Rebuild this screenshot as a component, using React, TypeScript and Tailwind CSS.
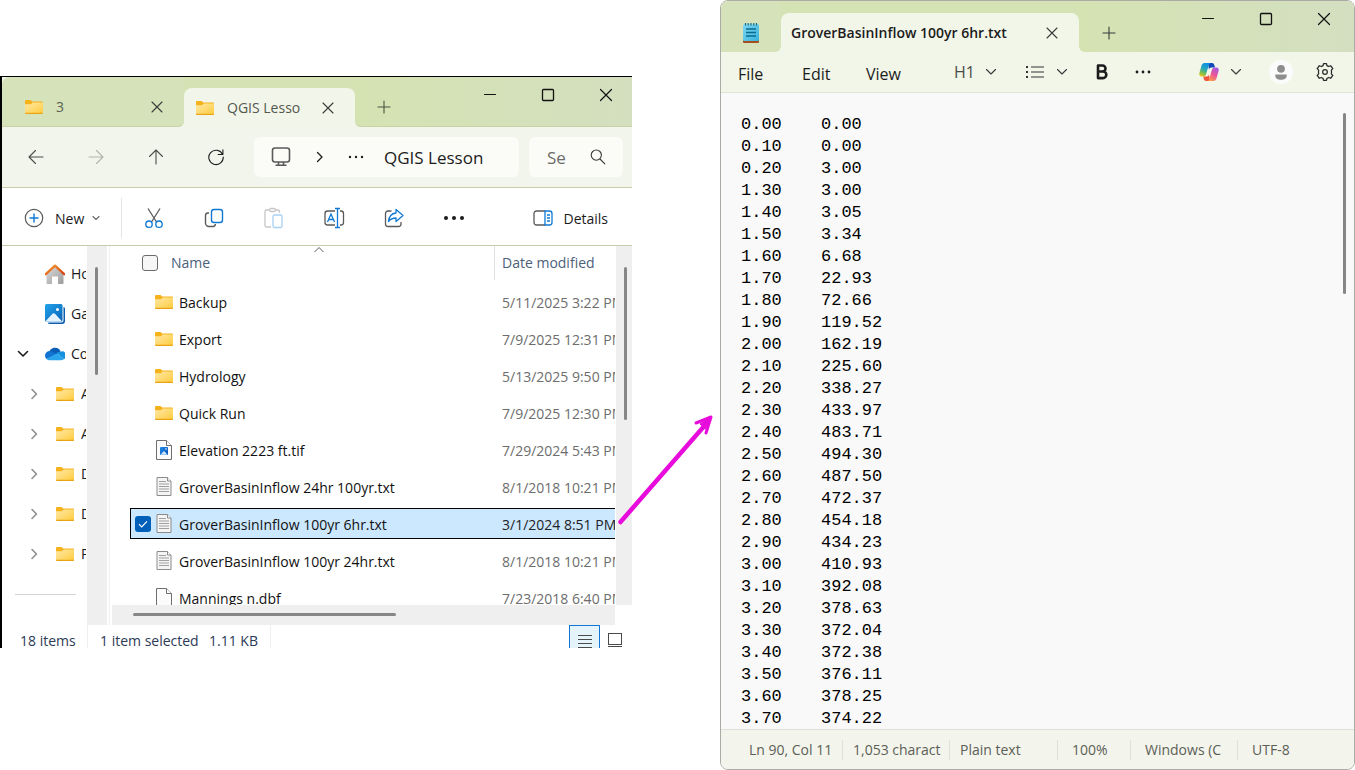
import React, { useId } from "react";

const sans = "font-['Open_Sans','Noto_Sans',sans-serif]";

const rows = [
  { name: "Backup", date: "5/11/2025 3:22 PM", kind: "folder" },
  { name: "Export", date: "7/9/2025 12:31 PM", kind: "folder" },
  { name: "Hydrology", date: "5/13/2025 9:50 PM", kind: "folder" },
  { name: "Quick Run", date: "7/9/2025 12:30 PM", kind: "folder" },
  { name: "Elevation 2223 ft.tif", date: "7/29/2024 5:43 PM", kind: "image" },
  { name: "GroverBasinInflow 24hr 100yr.txt", date: "8/1/2018 10:21 PM", kind: "text" },
  { name: "GroverBasinInflow 100yr 6hr.txt", date: "3/1/2024 8:51 PM", kind: "text", selected: true },
  { name: "GroverBasinInflow 100yr 24hr.txt", date: "8/1/2018 10:21 PM", kind: "text" },
  { name: "Mannings n.dbf", date: "7/23/2018 6:40 PM", kind: "blank" },
];

const samples = [
  ["0.00", "0.00"], ["0.10", "0.00"], ["0.20", "3.00"], ["1.30", "3.00"], ["1.40", "3.05"],
  ["1.50", "3.34"], ["1.60", "6.68"], ["1.70", "22.93"], ["1.80", "72.66"], ["1.90", "119.52"],
  ["2.00", "162.19"], ["2.10", "225.60"], ["2.20", "338.27"], ["2.30", "433.97"], ["2.40", "483.71"],
  ["2.50", "494.30"], ["2.60", "487.50"], ["2.70", "472.37"], ["2.80", "454.18"], ["2.90", "434.23"],
  ["3.00", "410.93"], ["3.10", "392.08"], ["3.20", "378.63"], ["3.30", "372.04"], ["3.40", "372.38"],
  ["3.50", "376.11"], ["3.60", "378.25"], ["3.70", "374.22"],
];

function Folder() {
  const id = useId();
  return (
    <svg width="20" height="16" viewBox="0 0 20 16" className="shrink-0" aria-hidden="true">
      <defs>
        <linearGradient id={id} x1="0" y1="0" x2="1" y2="1">
          <stop offset="0" stopColor="#ffe9a6" />
          <stop offset="1" stopColor="#ffcb3d" />
        </linearGradient>
      </defs>
      <path d="M1 2a1 1 0 0 1 1-1h4.500L8.300 2.500H18a1 1 0 0 1 1 1V6H1z" fill="#f5b21a" />
      <path d="M1 5.200h6L8.600 3.600H19V14a1 1 0 0 1-1 1H2a1 1 0 0 1-1-1z" fill={`url(#${id})`} />
      <path d="M1 13.700V14a1 1 0 0 0 1 1h16a1 1 0 0 0 1-1v-.3z" fill="#e9a317" />
    </svg>
  );
}

function TextFile() {
  return (
    <svg width="16" height="20" viewBox="0 0 16 20" className="shrink-0" aria-hidden="true">
      <path d="M1 .5h10.500L15 4v14.500H1z" fill="#f4f4f4" stroke="#8b8b8b" />
      <path d="M11.500.5V4H15" fill="#fff" stroke="#8b8b8b" />
      <path d="M3 4.500h7M3 7h10M3 9.500h10M3 12h10M3 14.500h10" stroke="#a0a0a0" />
    </svg>
  );
}

function PageFile({ picture }: { picture?: boolean }) {
  const id = useId();
  return (
    <svg width="16" height="20" viewBox="0 0 16 20" className="shrink-0" aria-hidden="true">
      <path d="M.5.500h10L15.500 5.500v14H.5z" fill="#fbfbfb" stroke="#6f6f6f" />
      <path d="M10.500.5v5h5" fill="#fff" stroke="#6f6f6f" />
      {picture && (
        <>
          <defs>
            <linearGradient id={id} x1="0" y1="0" x2="1" y2="1">
              <stop offset="0" stopColor="#1b8ce8" />
              <stop offset="1" stopColor="#0a4fb4" />
            </linearGradient>
          </defs>
          <rect x="4" y="7" width="8" height="8" rx=".8" fill={`url(#${id})`} />
          <path d="M4.500 14.800 8 11l3.500 3.800z" fill="#cfe9ff" />
          <circle cx="10" cy="9" r=".8" fill="#fff" />
        </>
      )}
    </svg>
  );
}

function FileIcon({ kind }: { kind: string }) {
  if (kind === "folder") return <Folder />;
  if (kind === "text") return <TextFile />;
  return <PageFile picture={kind === "image"} />;
}

type StrokeProps = {
  d: string;
  w?: number;
  h?: number;
  stroke?: string;
  sw?: number;
};

function Stroke({ d, w = 16, h = 16, stroke = "#3a3a3a", sw = 1.1 }: StrokeProps) {
  return (
    <svg
      width={w}
      height={h}
      viewBox={`0 0 ${w} ${h}`}
      fill="none"
      stroke={stroke}
      strokeWidth={sw}
      strokeLinecap="round"
      strokeLinejoin="round"
      className="shrink-0"
      aria-hidden="true"
    >
      <path d={d} />
    </svg>
  );
}

const CLOSE = "M3 3l10 10M13 3L3 13";
const PLUS = "M8 2v12M2 8h12";

function Dots({ size = 16, r = 1.2, gap = 6 }: { size?: number; r?: number; gap?: number }) {
  const c = size / 2;
  return (
    <svg width={size} height={size} viewBox={`0 0 ${size} ${size}`} fill="#1c1c1c" className="shrink-0" aria-hidden="true">
      <circle cx={c - gap} cy={c} r={r} />
      <circle cx={c} cy={c} r={r} />
      <circle cx={c + gap} cy={c} r={r} />
    </svg>
  );
}

function WindowControls() {
  const button = "flex h-9 w-[52px] items-center justify-center";
  return (
    <div className="ml-auto flex gap-[6px] self-start">
      <button aria-label="Minimize" className={button}>
        <Stroke d="M2.500 7.500h11" stroke="#111" sw={1} />
      </button>
      <button aria-label="Maximize" className={button}>
        <svg width="16" height="16" viewBox="0 0 16 16" fill="none" stroke="#111" strokeWidth="1.300" aria-hidden="true">
          <rect x="2.500" y="2.500" width="11" height="11" rx="1" />
        </svg>
      </button>
      <button aria-label="Close" className={button}>
        <Stroke d="M2.500 2.500l11 11M13.500 2.500l-11 11" stroke="#111" sw={1.2} />
      </button>
    </div>
  );
}

function HomeIcon() {
  return (
    <svg width="20" height="20" viewBox="0 0 20 20" className="shrink-0" aria-hidden="true">
      <defs>
        <linearGradient id="wall" x1="0" y1="0" x2="1" y2="1">
          <stop offset="0" stopColor="#dcdcdc" />
          <stop offset="1" stopColor="#9b9b9b" />
        </linearGradient>
        <linearGradient id="roof" x1="0" y1="0" x2="1" y2="1">
          <stop offset="0" stopColor="#f79b2e" />
          <stop offset="1" stopColor="#d5400e" />
        </linearGradient>
      </defs>
      <path d="M1.500 9.500 10 2l8.500 7.500V19a1 1 0 0 1-1 1H13v-7.500H7V20H2.500a1 1 0 0 1-1-1z" fill="url(#wall)" />
      <path d="M.8 10.200 10 1.600l9.200 8.600" fill="none" stroke="url(#roof)" strokeWidth="2.300" strokeLinejoin="round" strokeLinecap="round" />
    </svg>
  );
}

function GalleryIcon() {
  return (
    <svg width="20" height="20" viewBox="0 0 20 20" className="shrink-0" aria-hidden="true">
      <defs>
        <linearGradient id="sky" x1="0" y1="0" x2="1" y2="1">
          <stop offset="0" stopColor="#22a4ea" />
          <stop offset="1" stopColor="#0862b8" />
        </linearGradient>
      </defs>
      <path d="M18.500 3a1.500 1.500 0 0 1 1.500 1.500v12.500a3 3 0 0 1-3 3H4.500A1.500 1.500 0 0 1 3 18.500h13a2.500 2.500 0 0 0 2.500-2.500z" fill="#0b5fae" />
      <rect width="17.500" height="17.500" rx="1.500" fill="url(#sky)" />
      <path d="M1 16.800 7.200 10a2 2 0 0 1 3 0l6.300 6.800a1.500 1.500 0 0 1-1 .7H2a1.500 1.500 0 0 1-1-.7z" fill="#e4f3ff" />
      <circle cx="12.500" cy="5.500" r="1.500" fill="#fff" />
    </svg>
  );
}

function CloudIcon() {
  return (
    <svg width="20" height="14" viewBox="0 0 20 14" className="shrink-0" aria-hidden="true">
      <path d="M4 6.500C4.200 3 6.800.8 10 .8s5.200 1.800 5.700 4.400L10 9z" fill="#0a5cb5" />
      <path d="M5 4A4.800 4.800 0 0 0 0 8.800a4.400 4.400 0 0 0 1.500 3.300L12 7.600 8 4.900A5 5 0 0 0 5 4z" fill="#1173cf" />
      <path d="M15.200 4.900c-1.600-.2-2.600.2-3.900 1L19.300 12a4.100 4.100 0 0 0-4.100-7.100z" fill="#1490df" />
      <path d="M11.500 6.600 1.400 12A4.600 4.600 0 0 0 4.700 13.300h11.100a4.200 4.200 0 0 0 3.800-2z" fill="#2aa5ec" />
    </svg>
  );
}

function Bar({ className }: { className: string }) {
  return <span className={`block rounded-full bg-[#868686] ${className}`} />;
}

function Explorer() {
  const tool = "flex h-10 w-[60px] items-center justify-center";
  const label = "overflow-hidden whitespace-nowrap";
  return (
    <section className={`${sans} mt-[76px] min-w-0 overflow-hidden border-t border-l-2 border-black bg-white text-sm text-[#1b1b1b]`}>
      <header className="flex h-[50px] bg-[#f2f5ea]">
        <div className="flex w-[182px] shrink-0 items-center rounded-tl-lg rounded-br-md border-b border-[#c8d2a4] bg-[#d6e2ba] pt-[11px] pr-[19px] pl-[22px]">
          <button className="flex flex-1 items-center gap-3 text-left text-[#5b6150]">
            <Folder />3
          </button>
          <button aria-label="Close tab 3"><Stroke d={CLOSE} /></button>
        </div>
        <div className="flex w-[171px] shrink-0 bg-[#d5e3b4] pt-[11px]">
          <div className="flex w-full items-center rounded-t-lg bg-[#f2f5ea] pr-[19px] pl-[11px]">
            <button className="flex flex-1 items-center gap-3 text-left font-medium whitespace-nowrap text-[#55584f]">
              <Folder />QGIS Lesso
            </button>
            <button aria-label="Close tab QGIS Lesson"><Stroke d={CLOSE} /></button>
          </div>
        </div>
        <div className="flex min-w-0 flex-1 rounded-bl-md border-b border-[#c8d2a4] bg-linear-to-r from-[#d5e3b3] to-[#d3dfbe]">
          <button aria-label="New tab" className="mt-[11px] ml-[21px] flex items-center">
            <Stroke d={PLUS} stroke="#4c5340" />
          </button>
          <WindowControls />
        </div>
      </header>

      <nav aria-label="Navigation" className="flex h-[61px] items-center border-b border-[#c6cbaa] bg-[#f2f5eb] pr-[9px] pl-1">
        <button aria-label="Back" className={tool}><Stroke w={18} h={18} d="M16 9H2M8.500 2.500 2 9l6.500 6.500" stroke="#4b4d48" /></button>
        <button aria-label="Forward" className={tool}><Stroke w={18} h={18} d="M2 9h14M9.500 2.500 16 9l-6.500 6.500" stroke="#b1b4ab" /></button>
        <button aria-label="Up" className={tool}><Stroke w={18} h={18} d="M9 16V2M2.500 8.500 9 2l6.500 6.500" stroke="#4b4d48" /></button>
        <button aria-label="Refresh" className={tool}><Stroke w={18} h={18} d="M15.500 6.300A7.200 7.200 0 1 0 16.200 9M15.900 1.800v4.700h-4.700" stroke="#1c1c1c" sw={1.1} /></button>
        <div className="ml-2 flex h-10 min-w-0 flex-1 items-center gap-5 rounded-md bg-[#fbfcf8] pl-4">
          <svg width="22" height="22" viewBox="0 0 22 22" fill="none" stroke="#5a5a5a" strokeWidth="1.600" className="shrink-0" aria-hidden="true">
            <rect x="2.500" y="2" width="17" height="14" rx="2.500" />
            <path d="M8.500 16v2.500M13.500 16v2.500M5.500 19.200h11" />
          </svg>
          <Stroke d="M5.500 3.500 10 8l-4.500 4.500" stroke="#1c1c1c" sw={1.3} />
          <Dots />
          <button className="pt-[2px] text-[17px] whitespace-nowrap">QGIS Lesson</button>
        </div>
        <label className="ml-[10px] flex h-10 w-[94px] shrink-0 items-center rounded-md bg-[#fbfcf8] pr-4 pl-[18px]">
          <input type="search" aria-label="Search" placeholder="Se" className="w-0 min-w-0 flex-1 bg-transparent pt-[2px] text-[17px] outline-none placeholder:text-[#6b6d66]" />
          <Stroke w={18} h={18} d="M7.300 2a5 5 0 1 1 0 10.200 5 5 0 0 1 0-10.200M11 11l4.800 4.800" />
        </label>
      </nav>

      <div role="toolbar" aria-label="Commands" className="flex h-[58px] items-center border-b border-[#c6cbaa] pt-[2px] pr-6">
        <button className="flex h-10 w-[120px] shrink-0 items-center border-r border-[#e6e6e6] pl-[22px]">
          <svg width="20" height="20" viewBox="0 0 20 20" fill="none" aria-hidden="true">
            <circle cx="10" cy="10" r="8.700" stroke="#5a5a5a" strokeWidth="1.200" />
            <path d="M10 5.500v9M5.500 10h9" stroke="#0f78d4" strokeWidth="1.400" />
          </svg>
          <span className="mr-1 ml-[11px] pt-[2px]">New</span>
          <Stroke d="M5 6.500 8 9.500l3-3" stroke="#6b6b6b" />
        </button>
        <div className="ml-[2px] flex flex-1">
          <button aria-label="Cut" className={tool}>
            <svg width="22" height="22" viewBox="0 0 22 22" fill="none" strokeWidth="1.300" aria-hidden="true">
              <path d="M5 1.500 13.500 15M17 1.500 8.500 15" stroke="#5a5a5a" />
              <circle cx="6" cy="17.200" r="3.200" stroke="#0f78d4" />
              <circle cx="16" cy="17.200" r="3.200" stroke="#0f78d4" />
            </svg>
          </button>
          <button aria-label="Copy" className={tool}>
            <svg width="22" height="22" viewBox="0 0 22 22" fill="none" strokeWidth="1.400" aria-hidden="true">
              <path d="M6 6H5a2.500 2.500 0 0 0-2.500 2.500v7.500A3.500 3.500 0 0 0 6 19.500h4A2.500 2.500 0 0 0 12.400 17" stroke="#5a5a5a" />
              <rect x="8.500" y="2.500" width="11" height="13" rx="2.500" stroke="#0f78d4" />
            </svg>
          </button>
          <button aria-label="Paste" disabled className={tool}>
            <svg width="22" height="22" viewBox="0 0 22 22" fill="none" strokeWidth="1.300" aria-hidden="true">
              <path d="M7 3H3.500a1.500 1.500 0 0 0-1.500 1.500v14A1.500 1.500 0 0 0 3.500 20H8M13 3h2a1.500 1.500 0 0 1 1.500 1.500V6" stroke="#c6c6c6" />
              <rect x="6.500" y="1.500" width="6" height="3" rx="1.500" stroke="#c6c6c6" />
              <rect x="10" y="8" width="9" height="12.500" rx="1.500" stroke="#a9d0f2" />
            </svg>
          </button>
          <button aria-label="Rename" className={tool}>
            <svg width="22" height="22" viewBox="0 0 22 22" fill="none" strokeWidth="1.300" aria-hidden="true">
              <path d="M12 4H4.500A2.500 2.500 0 0 0 2 6.500v9A2.500 2.500 0 0 0 4.500 18H12M17 4h1a2.500 2.500 0 0 1 2.500 2.500v9A2.500 2.500 0 0 1 18 18h-1" stroke="#5a5a5a" />
              <path d="M4.500 15 8 7l3.500 8M5.700 12.500h4.600M14.500 1.500v19M12 1.500h5M12 20.500h5" stroke="#0f78d4" />
            </svg>
          </button>
          <button aria-label="Share" className={tool}>
            <svg width="22" height="22" viewBox="0 0 22 22" fill="none" strokeWidth="1.300" strokeLinejoin="round" aria-hidden="true">
              <path d="M8.500 4H5a2.500 2.500 0 0 0-2.500 2.500V17A2.500 2.500 0 0 0 5 19.500h10.500A2.500 2.500 0 0 0 18 17v-2" stroke="#5a5a5a" />
              <path d="M13 2.500 20 8.500l-7 6V11c-3.500 0-5.500 1-7.500 3.500C6 9.500 8.500 6.500 13 6z" stroke="#0f78d4" />
            </svg>
          </button>
          <button aria-label="More" className={tool}><Dots size={22} r={2} gap={8} /></button>
        </div>
        <button className="flex items-center gap-[10px]">
          <svg width="20" height="20" viewBox="0 0 20 20" fill="none" strokeWidth="1.300" aria-hidden="true">
            <path d="M12 3H3.500A2.500 2.500 0 0 0 1 5.500v9A2.500 2.500 0 0 0 3.500 17H12" stroke="#5a5a5a" />
            <path d="M12 3h4.500A2.500 2.500 0 0 1 19 5.500v9a2.500 2.500 0 0 1-2.500 2.500H12zM14 7h3M14 10h3M14 13h3" stroke="#0f78d4" />
          </svg>
          <span className="pt-[2px]">Details</span>
        </button>
      </div>

      <div className="flex h-[379px]">
        <aside className="flex w-[105px] shrink-0">
          <ul className="w-[84px] overflow-hidden pt-2 pl-[13px]">
            <li className="flex h-10 items-center pl-[30px]">
              <a href="#home" className="flex items-center gap-[6px]"><HomeIcon /><span className={label}>Home</span></a>
            </li>
            <li className="flex h-10 items-center pl-[30px]">
              <a href="#gallery" className="flex items-center gap-[6px]"><GalleryIcon /><span className={label}>Gallery</span></a>
            </li>
            <li className="flex h-10 items-center gap-[14px]">
              <Stroke d="M3.500 5.500 8 10l4.500-4.500" stroke="#1c1c1c" sw={1.6} />
              <a href="#cloud" className="flex items-center gap-[6px]"><CloudIcon /><span className={label}>Co</span></a>
            </li>
            {["A", "A", "D", "D", "P"].map((t, i) => (
              <li key={i} className="flex h-10 items-center gap-[13px] pl-[11px]">
                <Stroke d="M6 3.500 10.500 8 6 12.500" stroke="#8b8b8b" sw={1.5} />
                <a href={`#folder-${i}`} className="flex items-center gap-[6px]"><Folder /><span className={label}>{t}</span></a>
              </li>
            ))}
            <li aria-hidden="true" className="mt-5 mr-[10px] border-t border-[#d2d2d2]" />
          </ul>
          <div className="ml-px flex-1 bg-[#efefef] pt-[21px] pl-2"><Bar className="h-[108px] w-[3px]" /></div>
        </aside>

        <div className="ml-[2px] flex min-w-0 flex-1 flex-col border-l border-[#f0f0f0] pl-[2px]">
          <div className="flex h-[359px] w-full">
            <div className="relative min-w-0 flex-1 overflow-hidden pl-[18px]">
              <svg width="12" height="8" viewBox="0 0 12 8" className="absolute top-0 left-[201px]" fill="none" stroke="#5a5a5a" aria-hidden="true">
                <path d="M1.500 6 6 1.500 10.500 6" />
              </svg>
              <table className="-mt-[6px] w-full table-fixed border-separate border-spacing-x-0 border-spacing-y-[6px] text-left">
                <thead className="text-[#4c607a]">
                  <tr className="h-[34px]">
                    <th className="p-0 pl-[12px] font-normal">
                      <span className="flex items-center gap-[13px]">
                        <input type="checkbox" aria-label="Select all" className="size-4 appearance-none rounded-[3px] border border-[#6b6b6b] bg-[#f6f6f6]" />
                        Name
                      </span>
                    </th>
                    <th className="w-[121px] border-l border-[#e2e2e2] p-0 pl-[7px] font-normal whitespace-nowrap">Date modified</th>
                  </tr>
                </thead>
                <tbody>
                  {rows.map((r) => (
                    <tr key={r.name} className="h-[31px]">
                      <td className={r.selected ? "border-y border-l border-black bg-[#cce8ff] p-0" : "border-y border-l border-transparent p-0"}>
                        <span className="flex items-center">
                          {r.selected ? (
                            <span className="ml-1 grid size-4 place-items-center">
                              <input type="checkbox" defaultChecked aria-label={`Select ${r.name}`} className="col-start-1 row-start-1 size-4 appearance-none rounded-[3px] bg-[#005fb8]" />
                              <svg width="10" height="10" viewBox="0 0 10 10" fill="none" stroke="#fff" strokeWidth="1.200" className="pointer-events-none col-start-1 row-start-1" aria-hidden="true">
                                <path d="M1 5.200 3.700 8 9 2.300" />
                              </svg>
                            </span>
                          ) : (
                            <span className="ml-1 size-4" />
                          )}
                          <span className="mr-[2px] flex w-[26px] justify-center"><FileIcon kind={r.kind} /></span>
                          <span className="pt-[2px] whitespace-nowrap text-[#111]">{r.name}</span>
                        </span>
                      </td>
                      <td
                        className={
                          r.selected
                            ? "overflow-hidden border-y border-black bg-[#cce8ff] p-0 pt-[2px] pl-2 whitespace-nowrap text-[#222]"
                            : "overflow-hidden border-y border-transparent p-0 pt-[2px] pl-2 whitespace-nowrap text-[#6d6d6d]"
                        }
                      >
                        {r.date}
                      </td>
                    </tr>
                  ))}
                </tbody>
              </table>
            </div>
            <div className="ml-px w-4 shrink-0 bg-[#efefef] pt-[21px] pl-2"><Bar className="h-[153px] w-[3px]" /></div>
          </div>
          <div className="mr-[17px] flex-1 bg-[#efefef] pt-2 pl-[21px]"><Bar className="h-[3px] w-[263px]" /></div>
        </div>
      </div>

      <footer className="flex h-[23px] text-[#2c3a57]">
        <span className="w-[86px] border-r border-[#efefef] pt-[6px] pl-[18px] leading-5 whitespace-nowrap">18 items</span>
        <span className="w-[121px] pt-[6px] pl-3 leading-5 whitespace-nowrap">1 item selected</span>
        <span className="w-[62px] border-r border-[#efefef] pt-[6px] leading-5 whitespace-nowrap">1.11 KB</span>
        <div className="ml-auto flex gap-2 pr-[10px]">
          <button aria-label="Details view" className="flex w-[31px] justify-center border border-b-0 border-[#0f78d4] bg-[#e5f3fb] pt-2">
            <svg width="16" height="14" viewBox="0 0 16 14" stroke="#4a4a4a" aria-hidden="true">
              <path d="M1 1.500h14M1 5.500h14M1 9.500h14M1 13.500h14" />
            </svg>
          </button>
          <button aria-label="Large icons view" className="pt-2">
            <svg width="14" height="15" viewBox="0 0 14 15" fill="none" stroke="#4a4a4a" aria-hidden="true">
              <rect x=".5" y=".5" width="13" height="11" />
              <path d="M0 13.500h14" />
            </svg>
          </button>
        </div>
      </footer>
    </section>
  );
}

function NotepadIcon() {
  return (
    <svg width="16" height="20" viewBox="0 0 16 20" aria-hidden="true">
      <defs>
        <linearGradient id="pad" x1="0" y1="0" x2="1" y2="1">
          <stop offset="0" stopColor="#7fd8f3" />
          <stop offset="1" stopColor="#35b1dc" />
        </linearGradient>
      </defs>
      <path d="M0 17h16v2a1 1 0 0 1-1 1H1a1 1 0 0 1-1-1z" fill="#a5501c" />
      <rect y="1.500" width="16" height="16.500" rx="1" fill="url(#pad)" />
      <path d="M2.500 0v2.500M5.200 0v2.500M8 0v2.500M10.800 0v2.500M13.500 0v2.500" stroke="#0b6b8f" strokeWidth="1.200" />
      <path d="M3 6h10M3 9.500h10M3 13h10" stroke="#0b6b8f" strokeWidth="1.400" />
    </svg>
  );
}

function CopilotIcon() {
  return (
    <svg width="20" height="20" viewBox="0 0 20 20" aria-hidden="true">
      <defs>
        <linearGradient id="cpa" x1=".6" y1="0" x2=".2" y2="1">
          <stop offset="0" stopColor="#0d8fe8" />
          <stop offset=".45" stopColor="#27a9b5" />
          <stop offset=".75" stopColor="#7cc04a" />
          <stop offset="1" stopColor="#f5c518" />
        </linearGradient>
        <linearGradient id="cpb" x1=".8" y1="0" x2=".3" y2="1">
          <stop offset="0" stopColor="#a45be8" />
          <stop offset=".5" stopColor="#e8559a" />
          <stop offset="1" stopColor="#ff9a4d" />
        </linearGradient>
      </defs>
      <path d="M9 1h4c1.300 0 1.900.8 2.300 2l.7 2.500h-3.500c-1.500 0-2.200.8-2.600 2z" fill="#1449b8" />
      <path d="M11 19H7.200c-1.400 0-2-.9-2.400-2l-.6-2.500h3.300c1.500 0 2.200-.9 2.600-2z" fill="#f0563c" />
      <path d="M5.500 1h6.200c-1.200.3-1.700 1.300-2.100 2.600L7.300 11.500C6.800 13.300 6 14.500 4 14.500H2.500C.7 14.500-.1 12.800.4 11L2.500 3.500C3 2 4 1 5.500 1z" fill="url(#cpa)" />
      <path d="M14.500 19H8.300c1.200-.3 1.700-1.300 2.100-2.600l2.300-7.900c.5-1.800 1.300-3 3.300-3h1.500c1.800 0 2.600 1.700 2.100 3.500l-2.100 7.500c-.5 1.500-1.500 2.500-3 2.500z" fill="url(#cpb)" />
    </svg>
  );
}

function Notepad() {
  const menu = "w-16 pt-[3px] text-left";
  const cell = "shrink-0 overflow-hidden border-r border-[#dfe1d9] leading-5 whitespace-nowrap";
  const chev = "M1.500 3.500 6 8l4.500-4.500";
  return (
    <section className={`${sans} flex h-screen min-w-0 flex-col overflow-hidden rounded-lg border border-[#a9aba4] bg-[#f9f9f9] text-[#1c1c1c]`}>
      <header className="flex h-[51px] shrink-0 bg-[#f2f6e9]">
        <div className="flex w-[60px] shrink-0 items-center justify-center rounded-br-md bg-[#d6e2ba] pt-3"><NotepadIcon /></div>
        <div className="flex w-[298px] shrink-0 bg-[#d5e3b4] pt-3">
          <div className="flex w-full items-center rounded-t-lg bg-[#f2f6e9] pr-[19px] pl-[10px]">
            <button className="flex-1 text-left text-sm font-semibold whitespace-nowrap">GroverBasinInflow 100yr 6hr.txt</button>
            <button aria-label="Close tab"><Stroke d={CLOSE} /></button>
          </div>
        </div>
        <div className="flex min-w-0 flex-1 rounded-bl-md bg-linear-to-r from-[#d5e3b3] to-[#d3dfc0] pr-1">
          <button aria-label="New tab" className="mt-3 ml-[22px] flex items-center"><Stroke d={PLUS} /></button>
          <WindowControls />
        </div>
      </header>

      <div role="menubar" className="flex h-[41px] shrink-0 items-center border-b border-[#e0e3d8] bg-[#f2f6e9] pr-[19px] pl-[17px] text-base">
        <button className={menu}>File</button>
        <button className={menu}>Edit</button>
        <button className={menu}>View</button>
        <button className="ml-6 flex w-[72px] items-center gap-[10px] text-[#4a4c47]">
          H1 <Stroke w={12} h={12} d={chev} />
        </button>
        <button aria-label="List" className="flex w-[66px] items-center gap-3">
          <svg width="18" height="14" viewBox="0 0 18 14" fill="none" stroke="#333" aria-hidden="true">
            <path d="M5 2h13M5 7h13M5 12h13" strokeWidth="1.200" />
            <path d="M0 2h2M0 7h2M0 12h2" strokeWidth="2" />
          </svg>
          <Stroke w={12} h={12} d={chev} />
        </button>
        <button aria-label="Bold" className="flex w-5 justify-center">
          <svg width="14" height="18" viewBox="0 0 14 18" fill="none" stroke="#1c1c1c" strokeWidth="2.600" strokeLinejoin="round" aria-hidden="true">
            <path d="M3 2.500h4.500a3 3 0 0 1 0 6H3zM3 8.500h5a3.300 3.300 0 0 1 0 6.600H3z" />
          </svg>
        </button>
        <button aria-label="More" className="ml-[22px]"><Dots size={18} r={1.4} gap={6} /></button>
        <button aria-label="Copilot" className="ml-auto flex items-center gap-[11px]">
          <CopilotIcon />
          <Stroke w={12} h={12} d={chev} />
        </button>
        <button aria-label="Account" className="ml-[27px]">
          <svg width="24" height="24" viewBox="0 0 24 24" aria-hidden="true">
            <circle cx="12" cy="12" r="12" fill="#fbfbfb" />
            <circle cx="12" cy="8.800" r="3.900" fill="#8d8d8d" />
            <path d="M6.300 14.500h11.400v1.500c0 2.300-2.500 3.800-5.700 3.800s-5.700-1.500-5.700-3.800z" fill="#8d8d8d" />
          </svg>
        </button>
        <button aria-label="Settings" className="ml-[22px]">
          <svg width="20" height="20" viewBox="0 0 24 24" fill="none" stroke="#2a2a2a" strokeWidth="1.500" strokeLinejoin="round" aria-hidden="true">
            <path d="M9.700 4.300 10.200 2h3.600l.5 2.300c.7.300 1.400.6 2 1.100l2.500-.9 2.600 3.400-1.800 1.900c.2.700.2 1.500.2 2.200s0 1.500-.2 2.200l1.800 1.900-2.600 3.400-2.500-.9c-.6.500-1.300.800-2 1.100l-.5 2.300h-3.600l-.5-2.300c-.7-.3-1.400-.6-2-1.100l-2.500.9-2.600-3.400 1.800-1.900c-.2-.7-.2-1.500-.2-2.200s0-1.500.2-2.200L2.600 7.900l2.600-3.400 2.500.9c.6-.5 1.300-.8 2-1.100z" />
            <circle cx="12" cy="12" r="2.800" />
          </svg>
        </button>
      </div>

      <div className="flex min-h-0 flex-1">
        <textarea
          aria-label="Document text"
          readOnly
          wrap="off"
          rows={28}
          value={samples.map((s) => s.join("\t")).join("\n")}
          className="block min-w-0 flex-1 resize-none overflow-hidden bg-transparent pt-[21px] pl-5 font-['Liberation_Mono','DejaVu_Sans_Mono',monospace] text-[17px] leading-[22px] text-black outline-none [tab-size:80px]"
        />
        <div className="w-[11px] shrink-0 pt-5"><Bar className="h-[181px] w-[3px]" /></div>
      </div>

      <footer className="flex h-10 shrink-0 items-center border-t border-[#dfe1d9] bg-[#f3f4ec] text-sm text-[#5c5f57]">
        <span className={`${cell} w-[122px] pl-7`}>Ln 90, Col 11</span>
        <span className={`${cell} w-[107px] pl-[10px]`}>1,053 charact</span>
        <span className={`${cell} w-[108px] pl-[10px]`}>Plain text</span>
        <span className={`${cell} w-[73px] pl-[14px]`}>100%</span>
        <span className={`${cell} w-[107px] pl-[14px]`}>Windows (C</span>
        <span className="pl-[14px] leading-5">UTF-8</span>
      </footer>
    </section>
  );
}

export default function App() {
  return (
    <main className="grid min-h-screen grid-cols-[minmax(0,632fr)_88px_minmax(0,635fr)] items-start bg-white">
      <Explorer />
      <svg width="104" height="118" viewBox="0 0 104 118" fill="none" stroke="#e80cdc" strokeLinecap="round" className="z-10 mt-[410px] -ml-4 max-w-none" aria-hidden="true">
        <path d="M4.500 112 90 14" strokeWidth="4.500" />
        <path d="M80 13 95 7l-5 16" strokeWidth="3" strokeLinejoin="round" />
        <path d="M95 7 84 14l5 5z" fill="#e80cdc" />
      </svg>
      <Notepad />
    </main>
  );
}
